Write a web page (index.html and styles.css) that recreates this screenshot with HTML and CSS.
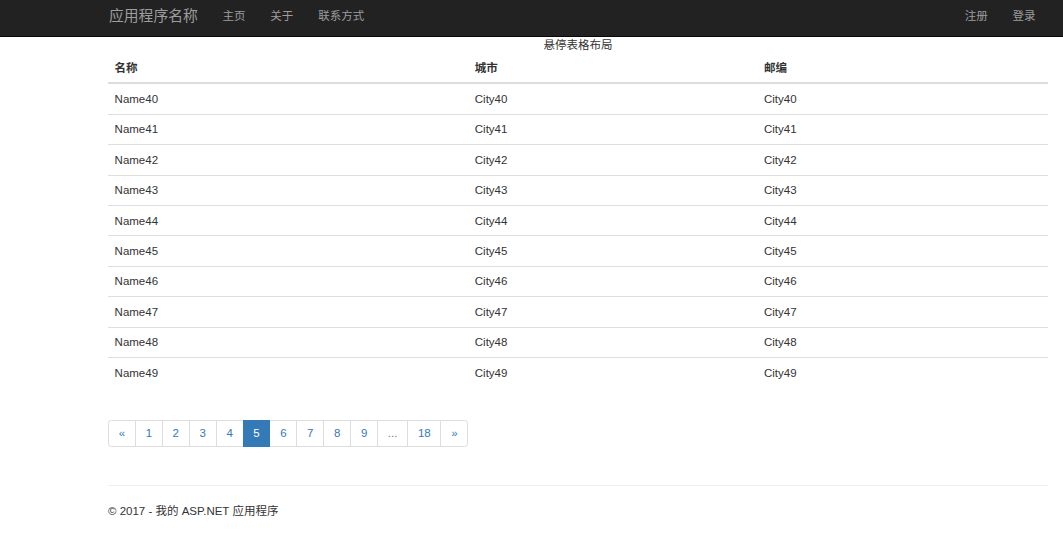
FILE: index.html
```html
<!DOCTYPE html>
<html>
  <head>
    <meta charset="utf-8">
    <title>悬停表格布局 - 我的 ASP.NET 应用程序</title>
    <meta name="viewport" content="width=device-width, initial-scale=1">
    <link rel="stylesheet" href="styles.css">
  </head>
  <body>
    <div class="navbar">
      <div class="container nav-inner">
        <a class="navbar-brand" href="#">应用程序名称</a>
        <ul class="nav">
          <li><a href="#">主页</a></li>
          <li><a href="#">关于</a></li>
          <li><a href="#">联系方式</a></li>
        </ul>
        <ul class="nav nav-right">
          <li><a href="#">注册</a></li>
          <li><a href="#">登录</a></li>
        </ul>
      </div>
    </div>
    <div class="container body-content">
      <table class="table">
        <caption>悬停表格布局</caption>
        <thead>
          <tr>
            <th class="col-name">名称</th>
            <th class="col-city">城市</th>
            <th>邮编</th>
          </tr>
        </thead>
        <tbody>
          <tr><td>Name40</td><td>City40</td><td>City40</td></tr>
          <tr><td>Name41</td><td>City41</td><td>City41</td></tr>
          <tr><td>Name42</td><td>City42</td><td>City42</td></tr>
          <tr><td>Name43</td><td>City43</td><td>City43</td></tr>
          <tr><td>Name44</td><td>City44</td><td>City44</td></tr>
          <tr><td>Name45</td><td>City45</td><td>City45</td></tr>
          <tr><td>Name46</td><td>City46</td><td>City46</td></tr>
          <tr><td>Name47</td><td>City47</td><td>City47</td></tr>
          <tr><td>Name48</td><td>City48</td><td>City48</td></tr>
          <tr><td>Name49</td><td>City49</td><td>City49</td></tr>
        </tbody>
      </table>
      <ul class="pagination">
        <li><a href="#">&laquo;</a></li>
        <li><a href="#">1</a></li>
        <li><a href="#">2</a></li>
        <li><a href="#">3</a></li>
        <li><a href="#">4</a></li>
        <li class="active"><a href="#">5</a></li>
        <li><a href="#">6</a></li>
        <li><a href="#">7</a></li>
        <li><a href="#">8</a></li>
        <li><a href="#">9</a></li>
        <li class="disabled"><a href="#">...</a></li>
        <li><a href="#">18</a></li>
        <li><a href="#">&raquo;</a></li>
      </ul>
      <hr>
      <footer>
        <p>&copy; 2017 - 我的 ASP.NET 应用程序</p>
      </footer>
    </div>
  </body>
</html>
```

FILE: styles.css
```css
html, body {
  margin: 0;
  padding: 0;
}
body {
  font-family: "Liberation Sans", Arial, "Noto Sans CJK SC", sans-serif;
  font-size: 11.5px;
  line-height: 16.2px;
  color: #333;
  background-color: #fff;
}
a {
  text-decoration: none;
}
.container {
  width: 940px;
  margin-left: 108px;
}
.navbar {
  height: 36px;
  background-color: #222;
  border-bottom: 1px solid #080808;
}
.nav-inner {
  display: flex;
  align-items: center;
  height: 32px;
  padding-bottom: 4px;
}
.navbar-brand {
  font-size: 14.8px;
  line-height: 20px;
  color: #9d9d9d;
  padding: 0 12.4px 0 1px;
}
.nav {
  display: flex;
  list-style: none;
  margin: 0;
  padding: 0;
}
.nav li a {
  display: block;
  padding: 0 12.4px;
  color: #9d9d9d;
  line-height: 30px;
}
.nav-right {
  margin-left: auto;
}
.table {
  width: 100%;
  border-collapse: collapse;
  margin-bottom: 33px;
}
caption {
  line-height: 16px;
  padding: 0;
  text-align: center;
  color: #333;
}
.table th,
.table td {
  padding: 6.6px 6.6px;
  text-align: left;
  vertical-align: top;
  line-height: 16.2px;
}
.table th {
  font-weight: bold;
  border-bottom: 2px solid #ddd;
}
.table td {
  border-top: 1px solid #ddd;
}
.table tbody tr:first-child td {
  border-top: 0;
}
.table tbody tr:hover {
  background-color: #f5f5f5;
}
.col-name {
  width: 347px;
}
.col-city {
  width: 276px;
}
.pagination {
  display: flex;
  list-style: none;
  margin: 33px 0 0;
  padding: 0;
}
.pagination li a {
  display: block;
  padding: 4.9px 9.75px;
  line-height: 15.4px;
  color: #337ab7;
  border: 1px solid #ddd;
  margin-left: -1px;
  background-color: #fff;
}
.pagination li:first-child a {
  margin-left: 0;
  border-radius: 3.3px 0 0 3.3px;
}
.pagination li:last-child a {
  border-radius: 0 3.3px 3.3px 0;
}
.pagination .active a {
  background-color: #337ab7;
  border-color: #337ab7;
  color: #fff;
  position: relative;
}
.pagination .disabled a {
  color: #777;
}
hr {
  margin: 38px 0 16.5px;
  border: 0;
  border-top: 1px solid #eee;
}
footer p {
  margin: 0 0 8px;
}
```
